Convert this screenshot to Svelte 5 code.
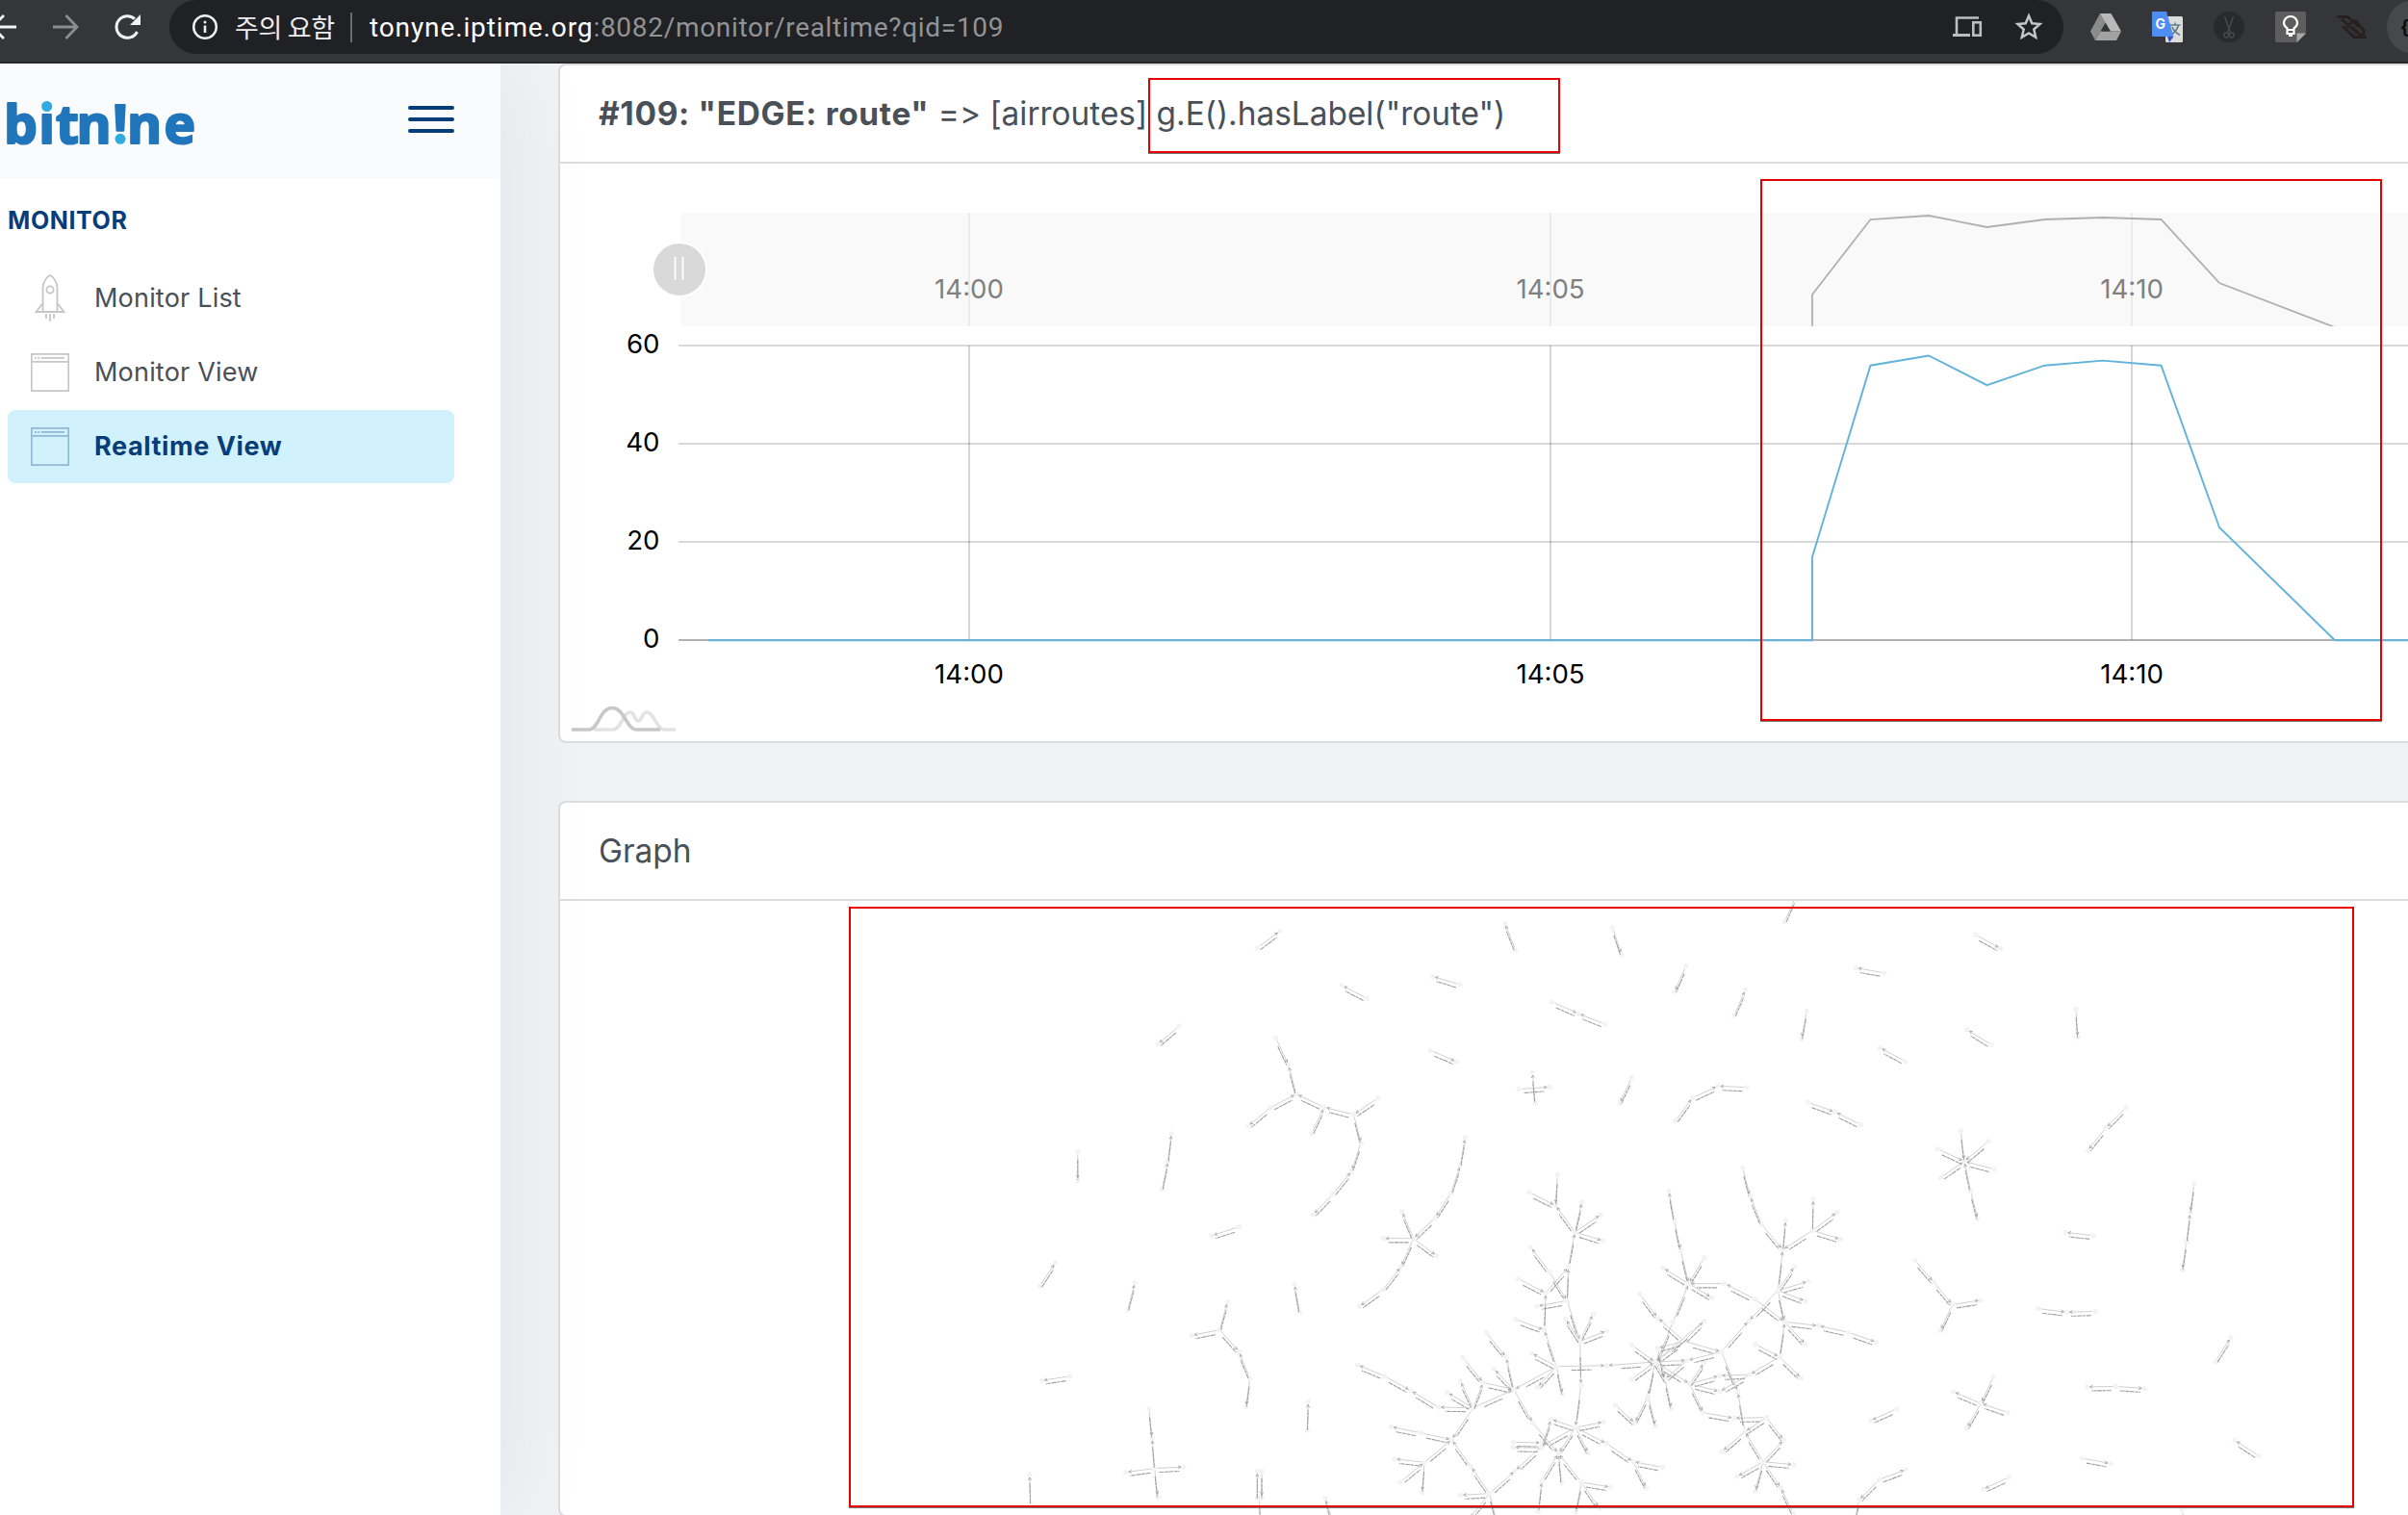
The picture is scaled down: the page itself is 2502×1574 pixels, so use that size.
<script>
  const menu = [
    { label: 'Monitor List', icon: 'rocket', active: false },
    { label: 'Monitor View', icon: 'browser', active: false },
    { label: 'Realtime View', icon: 'browser', active: true }
  ];

  // Time series: x position on the axis and the sampled value
  const samples = [
    [736, 0], [1883, 0], [1883, 17], [1943.5, 56], [2004, 58], [2064.5, 52], [2124.5, 56],
    [2185, 57], [2245.5, 56], [2306, 23], [2426, 0], [2502, 0]
  ];
  const mainLine = samples.map(([x, v]) => `${x},${665.3 - v * 5.1}`).join(' ');
  const scrollLine = samples.slice(1, -1).map(([x, v]) => `${x},${340 - v * 2}`).join(' ');
  const ticks = [[1007, '14:00'], [1611, '14:05'], [2215, '14:10']];
  const levels = [[359, '60'], [461, '40'], [563, '20'], [665, '0']];

  // Graph regions: origin, scale and edges (source x y, target x y)
  const regions = [
    { o: [560, 800], s: [2.24, 2.026], e: `1490 539 1440 577,1254 803 1254 864,1464 823 1472 765,1450 883 1464 823,1165 1087 1202 1037,1370 1137 1387 1079,1236 1276 1170 1285,1420 1345 1427 1406,1433 1470 1427 1406,1433 1470 1366 1478,1433 1470 1501 1467,1433 1470 1440 1530,1144 1545 1142 1483` },
    { o: [1240, 920], s: [2.45, 3], e: `162 195 220 142,820 201 793 118,1067 131 1090 215,1505 113 1535 30,442 352 378 311,679 309 609 283,913 363 980 399,1048 432 980 399,1254 250 1225 331,1376 406 1405 325,604 514 670 549,210 476 242 559,262 650 242 559,196 692 262 650,196 692 139 750,333 691 262 650,301 773 333 691,408 714 333 691,470 662 408 714,408 714 427 803,828 635 907 628,870 679 863 582,1116 598 1085 679,1227 734 1270 662,1270 662 1335 625,1408 629 1335 625` },
    { o: [1230, 1180], s: [3, 3], e: `552 22 523 110,465 182 523 110,465 182 403 246,862 92 877 5,833 178 862 92,833 178 784 255,784 255 716 320,716 320 680 236,716 320 622 320,716 320 788 374,716 320 677 408,621 479 677 408,621 479 547 532,172 284 87 311,361 549 345 462,112 605 136 518,112 605 24 622,112 605 172 673,206 756 172 673,206 756 194 845,385 918 388 829,229 1128 229 1045,243 1045 243 1128,235 1128 240 1215,465 1205 441 1130` },
    { o: [1380, 1200], s: [3, 3], e: `715 62 709 157,627 116 709 157,769 240 709 157,769 240 791 146,769 240 850 186,769 240 857 267,749 349 769 240,690 364 632 288,690 364 745 454,678 430 749 349,592 385 678 430,745 454 749 349,745 454 651 471,674 545 678 430,584 512 674 545,745 454 785 580,785 580 740 511,785 580 826 495,785 580 868 548,785 580 788 718,712 659 674 545,712 659 634 618,712 659 868 656,712 659 731 746,712 659 653 724,712 659 579 731,493 554 555 630,579 731 555 630,579 731 517 667,483 709 579 731,420 631 483 709,452 788 483 709,452 788 412 704,452 788 371 740,452 788 579 731,452 788 344 786,344 786 257 734,176 689 257 734,176 689 92 654,452 788 385 887,289 866 385 887,289 866 196 847,300 958 385 887,300 958 207 947,225 1019 300 958,300 958 293 1052,445 971 385 887,503 1055 445 971,503 1055 413 1060,503 1055 583 984,503 1055 440 1135,503 1055 525 1140,579 731 638 835,638 835 718 930,666 907 583 984,577 895 666 897,666 913 577 911,666 907 695 824,771 849 695 824,771 849 859 832,771 849 868 899,771 849 811 929,771 849 666 907,771 849 718 930,788 718 771 849,868 899 951 956,666 1016 718 930,727 1022 718 930,790 1020 718 930,655 1109 666 1016,790 1020 880 1035,790 1020 771 1113,790 1020 845 1100` },
    { o: [1660, 1200], s: [3, 3], e: `179 645 28 656,452 39 475 128,512 217 475 128,512 217 577 295,577 295 586 203,670 235 577 295,670 235 672 137,670 235 747 178,670 235 758 263,562 422 577 295,562 422 614 347,562 422 657 394,562 422 648 455,562 422 471 517,562 422 583 520,492 450 583 520,492 450 397 401,397 401 284 401,284 401 204 352,332 320 284 401,284 401 356 444,259 298 284 401,239 203 259 298,239 203 222 112,235 520 284 401,235 520 186 640,131 433 187 507,269 580 187 507,269 580 332 517,269 580 386 613,269 580 187 602,269 580 179 645,332 517 179 645,386 613 471 517,386 613 279 640,179 645 279 640,106 592 179 645,106 698 179 645,179 645 157 752,179 645 210 698,187 602 210 698,210 698 230 791,179 645 287 713,279 640 210 698,287 713 332 648,287 713 380 688,287 713 381 737,287 713 330 803,330 803 425 820,526 818 425 820,474 684 380 688,474 684 381 737,567 629 474 684,492 590 567 629,567 629 634 695,567 629 583 520,583 520 688 532,583 520 648 590,783 553 688 532,783 553 869 583,386 613 437 738,459 862 437 738,526 818 459 862,526 818 580 888,459 862 388 924,516 956 459 862,516 956 580 888,516 956 611 965,516 956 434 1002,516 956 491 1048,516 956 571 1037,610 1118 571 1037,157 752 116 835,157 752 181 845,55 779 116 835,202 973 111 956,111 956 152 1038` },
    { o: [1860, 920], s: [2.442, 2.398], e: `470 122 534 157,239 218 167 205,42 313 29 382,725 308 730 379,511 397 449 359,292 438 228 404,45 540 114 564,179 596 114 564,852 553 801 604,801 604 755 660,433 611 442 687,503 637 442 687,374 656 442 687,518 707 442 687,381 728 442 687,458 761 442 687,458 761 476 831,1025 743 1015 815,1006 886 1015 815,1006 886 995 958,770 872 698 864,317 934 364 988,364 988 412 1044,412 1044 484 1033,412 1044 381 1109,629 1054 702 1063,775 1061 702 1063,1079 1186 1118 1126,826 1248 753 1249,826 1248 899 1253,516 1224 484 1290,484 1290 414 1261,552 1313 484 1290,484 1290 448 1352,270 1304 204 1333,1189 1421 1128 1382,741 1427 813 1440,226 1480 294 1455,226 1480 175 1531,175 1531 160 1600,555 1474 490 1504,994 1555 1010 1620` }
  ];

  const edges = regions.flatMap(({ o, s, e }) =>
    e.split(',').map((row) => {
      const p = row.trim().split(' ').map(Number);
      const [x1, y1, x2, y2] = [o[0] + p[0] / s[0], o[1] + p[1] / s[1], o[0] + p[2] / s[0], o[1] + p[3] / s[1]];
      const len = Math.hypot(x2 - x1, y2 - y1);
      const ux = (x2 - x1) / len;
      const uy = (y2 - y1) / len;
      const tx = x2 - ux * 3;
      const ty = y2 - uy * 3;
      const mx = (x1 + x2) / 2;
      const my = (y1 + y2) / 2 + 4.2;
      return {
        x1, y1, x2, y2,
        line: `M${x1 + ux * 3} ${y1 + uy * 3}L${tx} ${ty}`,
        head: `M${tx - ux * 3 - uy * 1.5} ${ty - uy * 3 + ux * 1.5}L${tx} ${ty}L${tx - ux * 3 + uy * 1.5} ${ty - uy * 3 - ux * 1.5}`,
        label: `M${mx - ux * 10.5} ${my - uy * 10.5}L${mx + ux * 10.5} ${my + uy * 10.5}`
      };
    })
  );
</script>

<div class="page">
  <header class="toolbar">
    <svg class="nav" width="176" height="56" viewBox="0 0 176 56" fill="none" stroke-width="2.8">
      <path stroke="#f1f3f4" d="M17 28H-8M4 16L-8 28L4 40" />
      <path stroke="#8c8d90" d="M55 28H79M68.500 16L80 28L68.500 40" />
      <path stroke="#f1f3f4" stroke-width="3" d="M142.500 33A11.300 11.300 0 1 1 140 19.700" />
      <path fill="#f1f3f4" d="M146 15V26H135Z" />
    </svg>
    <div class="omnibox">
      <svg class="info" width="28" height="28" viewBox="0 0 28 28">
        <circle cx="14" cy="14" r="11.800" fill="none" stroke="#eee" stroke-width="2.500" />
        <path d="M14 12.500V20" stroke="#eee" stroke-width="2.600" />
        <circle cx="14" cy="9" r="1.500" fill="#eee" />
      </svg>
      <span class="warn">주의 요함</span>
      <span class="sep"></span>
      <span class="url">tonyne.iptime.org<span class="path">:8082/monitor/realtime?qid=109</span></span>
      <span class="grow"></span>
      <svg class="devices" width="32" height="32" viewBox="0 0 32 32" fill="none" stroke="#bdbdbd" stroke-width="2.600">
        <path d="M28 5.500H5V22" />
        <path stroke-width="3" d="M1 23.500H19" />
        <rect x="22.300" y="10.300" width="7.500" height="13.400" />
      </svg>
      <svg class="star" width="32" height="32" viewBox="0 0 32 32" fill="none" stroke="#c4c5c6" stroke-width="2.500">
        <path d="M16 4.500L19.300 12.300L27.500 13L21.300 18.500L23.200 26.700L16 22.400L8.800 26.700L10.700 18.500L4.500 13L12.700 12.300Z" />
      </svg>
    </div>
    <svg class="exts" width="358" height="56" viewBox="2144 0 358 56">
      <path fill="#8b8b8b" d="M2182 14L2172 32.500L2177 42L2188 23Z" />
      <path fill="#b9b9b9" d="M2182 14H2193.500L2204 32.500H2193Z" />
      <path fill="#a2a2a2" d="M2182.500 32.500H2204L2199 42H2177Z" />
      <path fill="#35363a" d="M2188 25.500L2192.300 32.500H2183.700Z" />
      <rect x="2250" y="17" width="18" height="27" rx="1.500" fill="#dcdcdc" />
      <path d="M2255 26H2265.500M2260 23.500V26M2263.500 26C2262 32 2258.500 34.500 2255.500 36.500M2257 28C2258.500 32 2261.500 34.500 2265 36.500" fill="none" stroke="#5f7d88" stroke-width="1.700" />
      <path fill="#3453c0" d="M2252 38H2258.500L2254 44Z" />
      <path fill="#4f8df1" d="M2237 12H2251L2258.500 38H2237.500Q2236 38 2236 36.500V13Q2236 12 2237 12Z" />
      <text x="2239.500" y="30" font-size="14" font-weight="700" fill="#fff">G</text>
      <circle cx="2316" cy="28" r="16" fill="#28292b" />
      <g fill="none" stroke="#47484b" stroke-width="1.500">
        <path d="M2311.500 17L2317.500 34M2320.500 17L2314.500 34" />
        <circle cx="2313.300" cy="36.500" r="2.400" /><circle cx="2318.700" cy="36.500" r="2.400" />
      </g>
      <path fill="#5d5d5d" d="M2366 12H2394Q2396 12 2396 14V35L2387 44H2366Q2364 44 2364 42V14Q2364 12 2366 12Z" />
      <path fill="#a8a8a8" d="M2396 34.500L2386.500 44V34.500Z" />
      <path fill="none" stroke="#fff" stroke-width="2.200" d="M2376.500 31V29.500C2374.500 28 2373 26 2373 24A7 7 0 0 1 2387 24C2387 26 2385.500 28 2383.500 29.500V31ZM2376.500 32V35H2383.500V32M2378 37H2382" />
      <g fill="none" stroke="#28201f" stroke-width="2.800">
        <path d="M2428.500 17.500H2439L2451 28M2433 20L2446 32M2434 27L2446 38.500H2459M2444 22L2448 22L2456 31.500V36M2438 28L2444 23M2450 34L2444 28M2447 33L2456 38" />
      </g>
      <circle cx="2508" cy="28" r="28" fill="#47484b" />
      <text x="2494" y="35" font-size="19" font-weight="700" fill="#0c0c0c">{'{'}</text>
    </svg>
  </header>

  <div class="body">
    <aside class="sidebar">
      <div class="brand">
        <svg width="212" height="76" viewBox="-8 -16 212 76">
          <text class="wordmark" x="-4 32.300 50 71.500 109.100 124 162.500" y="46">bitn!ne</text>
          <circle class="dot" cx="40.700" cy="7.500" r="6.300" />
          <circle class="dot" cx="117" cy="41.300" r="6.300" />
        </svg>
        <div class="burger"><i></i><i></i><i></i></div>
      </div>
      <h5>MONITOR</h5>
      <nav>
        {#each menu as item}
          <a class:active={item.active}>
            {#if item.icon === 'rocket'}
              <svg width="40" height="50" viewBox="0 0 40 50" fill="none" stroke="currentColor" stroke-width="1.800">
                <path d="M12.500 39V14C12.500 8 17 2 20 1C23 2 27.500 8 27.500 14V39M12.500 30L5.500 39H34.500L27.500 30" />
                <circle cx="20" cy="16" r="3.600" />
                <path d="M16 41V46M20 41V49M24 41V46" />
              </svg>
            {:else}
              <svg width="40" height="40" viewBox="0 0 40 40" fill="none" stroke="currentColor" stroke-width="1.700">
                <path d="M.8.8H39.200V39.200H.8ZM.8 8.800H39.200" />
                <path d="M4 4.800H6M7 4.800H9M10.500 4.800H35" />
              </svg>
            {/if}
            <span>{item.label}</span>
          </a>
        {/each}
      </nav>
    </aside>

    <main>
      <section class="card">
        <h2><span class="title"><b>#109: "EDGE: route"</b> =&gt; [airroutes] g.E().hasLabel("route")</span></h2>
        <svg class="chart" width="1920" height="600" viewBox="582 170 1920 600">
          <rect x="707" y="221" width="1800" height="118" fill="#f9f9f9" />
          {#each ticks as [x, label]}
            <path d="M{x} 221V339" stroke="#ebebeb" stroke-width="2" />
            <path d="M{x} 359V665" stroke="#000" stroke-opacity=".16" stroke-width="2" />
            <text class="tick soft" {x} y="309.500">{label}</text>
            <text class="tick" {x} y="709.500">{label}</text>
          {/each}
          {#each levels as [y, label]}
            <path d="M705 {y}H2502" stroke="#000" stroke-opacity={y === 665 ? 0.3 : 0.15} stroke-width="2" />
            <text class="level" x="685.500" y={y + 7.5}>{label}</text>
          {/each}
          <clipPath id="strip"><rect x="707" y="221" width="1800" height="118" /></clipPath>
          <polyline points={scrollLine} clip-path="url(#strip)" fill="none" stroke="#b0b0b0" stroke-width="1.800" />
          <polyline points={mainLine} fill="none" stroke="#62b3d9" stroke-width="1.900" />
          <circle cx="706" cy="280" r="28" fill="#d9d9d9" stroke="#fff" stroke-width="2" />
          <path d="M701.500 267V291M709.500 267V291" stroke="#fff" stroke-width="1.800" />
          <g fill="none" stroke-width="3.600">
            <path stroke="#e3e3e3" d="M617 758H637C646 758 647 740 654.500 740C660 740 659 749 663 749C667 749 667 740 672 740C680 740 682 758 690 758H702" />
            <path stroke="#c8c8c8" d="M594 758H612C622 758 623 735.500 636 735.500C649 735.500 651 758 661 758H686" />
          </g>
        </svg>
      </section>

      <section class="card">
        <h2><span class="name">Graph</span></h2>
        <svg class="graph" width="1920" height="638" viewBox="582 936 1920 638">
          {#each edges as e}
            <circle cx={e.x1} cy={e.y1} r="2.600" />
            <circle cx={e.x2} cy={e.y2} r="2.600" />
          {/each}
          {#each edges as e}
            <path class="line" d={e.line} />
            <path class="head" d={e.head} />
            <path class="label" d={e.label} />
          {/each}
        </svg>
      </section>
    </main>
  </div>

  <div class="mark query"></div>
  <div class="mark peak"></div>
  <div class="mark network"></div>
</div>

<style>
  :global(body) { margin: 0; overflow: hidden; }
  .page {
    position: relative; width: 2502px; height: 1574px; overflow: hidden;
    display: flex; flex-direction: column;
    font-family: Inter, "Noto Sans CJK KR", sans-serif; color: #495057;
  }
  svg { display: block; flex: none; }
  .toolbar {
    height: 64px; flex: none; display: flex; align-items: flex-start;
    background: #35363a; border-bottom: 2px solid #28282a;
    position: relative; z-index: 3;
  }
  .omnibox {
    width: 1968px; height: 56px; box-sizing: border-box; padding: 0 20px 0 23px;
    display: flex; align-items: center; background: #202124; border-radius: 28px; color: #fff;
  }
  .warn { margin-left: 17px; width: 105px; font: 27px "Noto Sans CJK KR", sans-serif; letter-spacing: -.3px; line-height: 54px; white-space: nowrap; color: #eee; }
  .sep { width: 2px; height: 31px; margin: 0 18px 0 15px; background: #6a6b6e; }
  .url { font: 28px Roboto, sans-serif; letter-spacing: .88px; white-space: nowrap; }
  .path { color: #929396; letter-spacing: .7px; }
  .grow { flex: 1; }
  .devices { margin-top: 1px; }
  .star { margin-left: 32px; }
  .body { flex: 1; min-height: 0; display: flex; background: #eff3f6; }
  .sidebar {
    width: 520px; flex: none; background: #fff; position: relative; z-index: 2;
    box-shadow: 14px 0 92px rgba(4, 9, 20, .05);
  }
  .brand {
    height: 120px; box-sizing: border-box; padding: 21px 48px 0 0;
    display: flex; justify-content: space-between; background: #fafbfd;
  }
  .wordmark { font: 700 55px "Open Sans", sans-serif; fill: #2176bb; stroke: #2176bb; stroke-width: 2.2; stroke-linejoin: round; }
  .dot { fill: #2fabe1; stroke: #fafbfd; stroke-width: 1.5; }
  .burger { width: 48px; height: 28px; margin-top: 23px; display: flex; flex-direction: column; justify-content: space-between; }
  .burger i { height: 4px; border-radius: 2px; background: #083d77; }
  h5 { margin: 0; padding: 28px 0 0 8px; font-size: 25px; line-height: 30px; font-weight: 700; letter-spacing: .6px; color: #083d77; }
  nav { padding: 28px 48px 0 8px; display: flex; flex-direction: column; gap: 1px; }
  nav a { height: 76px; padding-left: 24px; display: flex; align-items: center; gap: 26px; border-radius: 8px; color: #c6c6c8; }
  nav span { font-size: 27px; line-height: 40px; letter-spacing: .2px; color: #495057; white-space: nowrap; }
  nav .active { background: #d1f1fd; color: #91b9d3; }
  nav .active span { font-weight: 700; letter-spacing: .6px; color: #083d77; }
  main { flex: 1; min-width: 0; padding-left: 60px; display: flex; flex-direction: column; gap: 60px; }
  .card {
    width: 1960px; flex: none; background: #fff; border: 2px solid #dcdddf;
    border-radius: 8px; box-sizing: border-box; overflow: hidden;
  }
  .card h2 {
    height: 100px; margin: 0; padding-left: 40px; display: flex; align-items: center;
    border-bottom: 2px solid #dcdddf; font-size: 33.4px; font-weight: 400; white-space: nowrap;
    font-feature-settings: "calt" 0;
  }
  .title, .name { line-height: 40px; }
  .title b { letter-spacing: .7px; }
  .name { padding-bottom: 1px; }
  .tick, .level { font-size: 27.6px; fill: #000; }
  .tick { text-anchor: middle; }
  .level { text-anchor: end; }
  .soft { fill: #808080; }
  .graph circle { fill: #f3f3f3; }
  .graph path { fill: none; }
  .line { stroke: #cbcbcb; stroke-width: .9; }
  .head { stroke: #9a9a9a; stroke-width: .8; }
  .label { stroke: #9e9e9e; stroke-width: 1.1; stroke-dasharray: 5 .8 3.5 .6; }
  .mark { position: absolute; z-index: 4; box-sizing: border-box; border: 2px solid #e60000; box-shadow: 0 1px 0 #777; }
  .query { left: 1193px; top: 81px; width: 428px; height: 78px; }
  .peak { left: 1829px; top: 186px; width: 646px; height: 563px; }
  .network { left: 882px; top: 942px; width: 1564px; height: 624px; }
</style>
